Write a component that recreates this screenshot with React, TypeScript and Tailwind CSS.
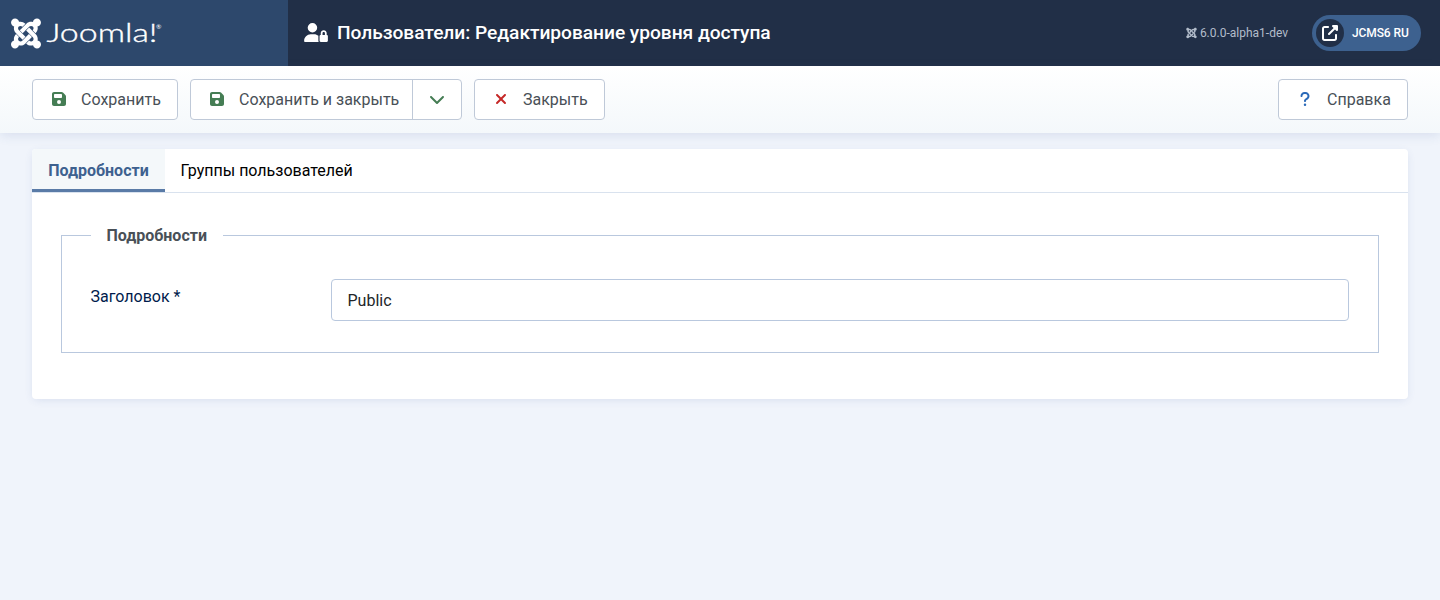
import React from 'react';
import {
  FaChevronDown,
  FaFloppyDisk,
  FaJoomla,
  FaQuestion,
  FaUpRightFromSquare,
  FaUserLock,
  FaXmark,
} from 'react-icons/fa6';

function Brand() {
  return (
    <div className="flex h-[66px] w-72 shrink-0 items-center bg-[#2d486c] pl-[11px]">
      <FaJoomla className="h-[35px] w-[30px] shrink-0" />
      <svg className="ml-1 h-8 w-[120px] shrink-0" viewBox="0 0 120 32" fill="#fff" aria-label="Joomla!">
        <text
          x="1.5"
          y="25"
          textLength="111"
          lengthAdjust="spacingAndGlyphs"
          stroke="#fff"
          strokeWidth="0.35"
          className="font-['Lato',sans-serif] text-[25.5px] font-light"
        >
          Joomla!
        </text>
        <text x="111" y="12" className="font-['Lato',sans-serif] text-[6.5px]">
          ®
        </text>
      </svg>
    </div>
  );
}

function Header() {
  return (
    <header className="flex h-[66px] items-center bg-[#212f47] text-white">
      <Brand />
      <h1 className="flex items-center pl-4 text-[19.2px] font-medium leading-6 tracking-[-0.045px]">
        <FaUserLock className="-mt-px mr-[9px] h-[19px] w-6" />
        Пользователи: Редактирование уровня доступа
      </h1>
      <div className="ml-auto flex items-center text-xs text-[#b3bdcb]">
        <FaJoomla className="mr-[3px] h-3 w-[11px]" />
        6.0.0-alpha1-dev
      </div>
      <a className="ml-6 mr-[19px] flex h-9 w-[109px] items-center rounded-full bg-[#3d618f] pl-1 text-xs font-medium">
        <span className="mr-2 flex h-7 w-7 items-center justify-center rounded-full bg-[#212f47]">
          <FaUpRightFromSquare className="h-4 w-4" />
        </span>
        <span className="tracking-[-0.1px]">JCMS6 RU</span>
      </a>
    </header>
  );
}

const button =
  'flex h-[41px] items-center rounded border border-[#bfc9d8] bg-white text-base text-[#495057]';

function Toolbar() {
  return (
    <div className="flex h-[67px] items-start gap-3 bg-gradient-to-b from-white to-[#f4f8fb] px-8 pt-[13px] shadow-[0_3px_10px_rgba(60,90,160,0.12)]">
      <button className={`${button} w-[146px] pl-[19px]`}>
        <FaFloppyDisk className="-mt-px mr-[15px] h-4 w-[14px] text-[#457d54]" />
        Сохранить
      </button>
      <div className={`${button} w-[272px]`}>
        <button className="flex h-full w-[222px] items-center border-r border-[#bfc9d8] pl-[19px]">
          <FaFloppyDisk className="-mt-px mr-[15px] h-4 w-[14px] text-[#457d54]" />
          Сохранить и закрыть
        </button>
        <button className="flex flex-1 justify-center">
          <FaChevronDown className="-mt-px h-4 w-4 text-[#457d54]" />
        </button>
      </div>
      <button className={`${button} w-[131px] pl-[19px]`}>
        <FaXmark className="-mt-0.5 mr-[15px] h-4 w-[14px] text-[#c52827]" />
        Закрыть
      </button>
      <button className={`${button} ml-auto w-[130px] pl-[19px]`}>
        <FaQuestion className="-mt-0.5 mr-[15px] h-4 w-[14px] text-[#2a69b8]" />
        Справка
      </button>
    </div>
  );
}

export default function App() {
  return (
    <div className="min-h-[600px] bg-[#f0f4fb] font-['Roboto',sans-serif]">
      <Header />
      <Toolbar />
      <main className="mx-8 mt-4 h-[250px] overflow-visible rounded bg-white shadow-[0_2px_10px_-2px_rgba(60,90,160,0.16)]">
        <nav className="flex h-11 items-start border-b border-[#d9e2ee] leading-6">
          <button className="h-[43px] w-[133px] rounded-tl border-b-[3px] border-[#5a7ba7] bg-[#f4f8fa] pt-[3px] font-bold text-[#3d618f]">
            Подробности
          </button>
          <button className="h-[43px] px-[15.5px] text-black">Группы пользователей</button>
        </nav>
        <section className="px-[29px] pt-[31px]">
          <fieldset className="h-[129px] border border-[#b9c8de] px-[29px]">
            <legend className="pl-[15.5px] pr-4 font-bold leading-[23px] text-[#495057]">Подробности</legend>
            <div className="flex items-start pt-8">
              <label className="-ml-[0.5px] w-[240.5px] pt-[6px] leading-6 text-[#001b4c]">Заголовок *</label>
              <input
                className="h-[42px] flex-1 rounded border border-[#b9c8de] bg-white px-[15.5px] text-[#22262a]"
                defaultValue="Public"
              />
            </div>
          </fieldset>
        </section>
      </main>
    </div>
  );
}
